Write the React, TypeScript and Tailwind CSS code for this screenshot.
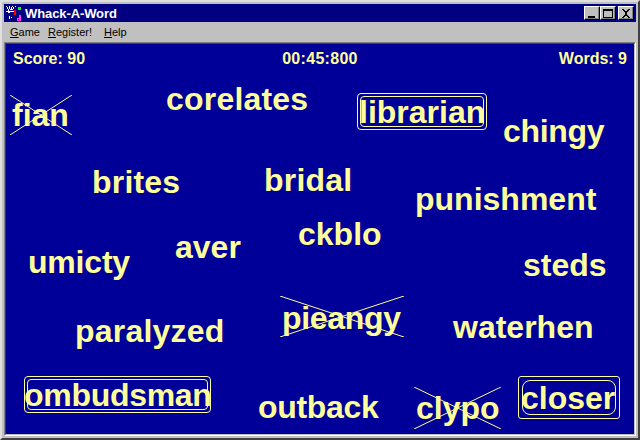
const words = [
  { text: 'fian', x: 12, y: 97, ls: 'tracking-normal' },
  { text: 'corelates', x: 166, y: 81, ls: 'tracking-[0.2px]' },
  { text: 'librarian', x: 359, y: 94, ls: 'tracking-normal' },
  { text: 'chingy', x: 503, y: 113, ls: 'tracking-[-0.3px]' },
  { text: 'brites', x: 92, y: 164, ls: 'tracking-[0.2px]' },
  { text: 'bridal', x: 264, y: 162, ls: 'tracking-[0.2px]' },
  { text: 'punishment', x: 415, y: 181, ls: 'tracking-normal' },
  { text: 'ckblo', x: 298, y: 216, ls: 'tracking-normal' },
  { text: 'aver', x: 175, y: 229, ls: 'tracking-normal' },
  { text: 'umicty', x: 28, y: 244, ls: 'tracking-[-0.2px]' },
  { text: 'steds', x: 523, y: 247, ls: 'tracking-normal' },
  { text: 'pieangy', x: 282, y: 300, ls: 'tracking-[-0.3px]' },
  { text: 'paralyzed', x: 75, y: 313, ls: 'tracking-[0.2px]' },
  { text: 'waterhen', x: 453, y: 309, ls: 'tracking-normal' },
  { text: 'ombudsman', x: 24, y: 377, ls: 'tracking-[-0.3px]' },
  { text: 'outback', x: 258, y: 389, ls: 'tracking-[-0.3px]' },
  { text: 'clypo', x: 416, y: 390, ls: 'tracking-normal' },
  { text: 'closer', x: 521, y: 380, ls: 'tracking-normal' },
];

const crosses = [
  { x: 10, y: 95, w: 62, h: 40 },
  { x: 280, y: 296, w: 124, h: 41 },
  { x: 414, y: 387, w: 87, h: 42 },
];

const selections = [
  { x: 357, y: 93, w: 130, h: 37, outer: 'rounded-[4px] p-0.5', inner: 'rounded-[4px]' },
  { x: 24, y: 376, w: 187, h: 37, outer: 'rounded-[4px] p-0.5', inner: 'rounded-[4px]' },
  { x: 518, y: 376, w: 102, h: 43, outer: 'rounded-[3px] p-[3px]', inner: 'rounded-[8px]' },
];

function TitleButton({ children, className }: { children: React.ReactNode; className?: string }) {
  return (
    <div className={`w-4 h-[14px] bg-[#c0c0c0] border border-t-white border-l-white border-r-black border-b-black shadow-[inset_-1px_-1px_0_#808080] flex items-center justify-center ${className ?? ''}`}>
      {children}
    </div>
  );
}

function AppIcon() {
  return (
    <svg width="16" height="16" viewBox="0 0 16 16" shapeRendering="crispEdges">
      <path d="M0 1h1v1H0zM3 1h1v1H3zM6 1h1v1H6zM9 1h1v1H9zM1 2h1v2H1zM3 2h1v2H3zM5 2h1v2H5zM7 2h1v2H7zM2 4h1v2H2zM4 4h3v1H4zM0 6h9v1H0zM2 7h2v1H2z" fill="#fff" />
      <path d="M12 2h3v3h-3z" fill="#00ff00" />
      <path d="M8 5h2v5H8z" fill="#ff0000" />
      <path d="M3 11h1v3H3zM5 12h1v1H5z" fill="#fff" />
      <path d="M13 10h2v3h-2zM11 13h4v3h-4z" fill="#ff33ff" />
      <path d="M12 14h1v1h-1z" fill="#000080" />
    </svg>
  );
}

export default function App() {
  return (
    <div className="w-[640px] h-[440px] overflow-hidden bg-[#c0c0c0] border-2 border-t-[#dfdfdf] border-l-[#dfdfdf] border-r-[#404040] border-b-[#404040] p-0.5 flex flex-col font-['Liberation_Sans',sans-serif]">
      <div className="h-[18px] shrink-0 bg-[#000080] flex items-center pl-0.5 pr-0.5 gap-[3px]">
        <AppIcon />
        <span className="text-[13px] font-bold text-white leading-none tracking-[-0.1px]">Whack-A-Word</span>
        <div className="ml-auto flex items-center">
          <TitleButton>
            <div className="w-[7px] h-0.5 bg-black mt-[7px] mr-0.5" />
          </TitleButton>
          <TitleButton>
            <div className="w-[10px] h-[9px] border border-t-2 border-black" />
          </TitleButton>
          <TitleButton className="ml-0.5">
            <svg width="10" height="9" viewBox="0 0 10 9" shapeRendering="crispEdges">
              <path d="M1 0h2v1h1v1h2V1h1V0h2v1H8v1H7v1H6v3h1v1h1v1h1v1H7V8H6V7H4v1H3v1H1V8h1V7h1V6h1V3H3V2H2V1H1z" fill="#000" />
            </svg>
          </TitleButton>
        </div>
      </div>

      <div className="h-5 shrink-0 flex items-center gap-2 pl-1.5 text-[11px] text-black">
        <span><u>G</u>ame</span>
        <span><u>R</u>egister!</span>
        <span className="ml-1"><u>H</u>elp</span>
      </div>

      <div className="flex-1 flex border border-t-[#808080] border-l-[#808080] border-r-white border-b-white">
        <div className="relative flex-1 bg-[#000099] border border-t-[#404040] border-l-[#404040] border-r-[#c0c0c0] border-b-[#c0c0c0] text-[#ffff99] font-bold">
          <div className="grid grid-cols-[1fr_auto_1fr] px-[7px] pt-1.5 text-base leading-[18px]">
            <span>Score: 90</span>
            <span className="tracking-[0.3px]">00:45:800</span>
            <span className="text-right">Words: 9</span>
          </div>

          {words.map((w) => (
            <span
              key={w.text}
              className={`absolute text-[32px] leading-9 whitespace-nowrap ${w.ls}`}
              style={{ left: w.x - 6, top: w.y - 44 }}
            >
              {w.text}
            </span>
          ))}

          {crosses.map((c) => (
            <svg
              key={c.x}
              className="absolute"
              width={c.w}
              height={c.h}
              viewBox={`0 0 ${c.w} ${c.h}`}
              style={{ left: c.x - 6, top: c.y - 44 }}
            >
              <path d={`M0 0L${c.w} ${c.h}M0 ${c.h}L${c.w} 0`} stroke="#ffff99" strokeWidth="1" fill="none" />
            </svg>
          ))}

          {selections.map((s) => (
            <div
              key={s.x}
              className={`absolute border border-[#ffff99] ${s.outer}`}
              style={{ left: s.x - 6, top: s.y - 44, width: s.w, height: s.h }}
            >
              <div className={`w-full h-full border border-[#ffff99] ${s.inner}`} />
            </div>
          ))}
        </div>
      </div>
    </div>
  );
}
